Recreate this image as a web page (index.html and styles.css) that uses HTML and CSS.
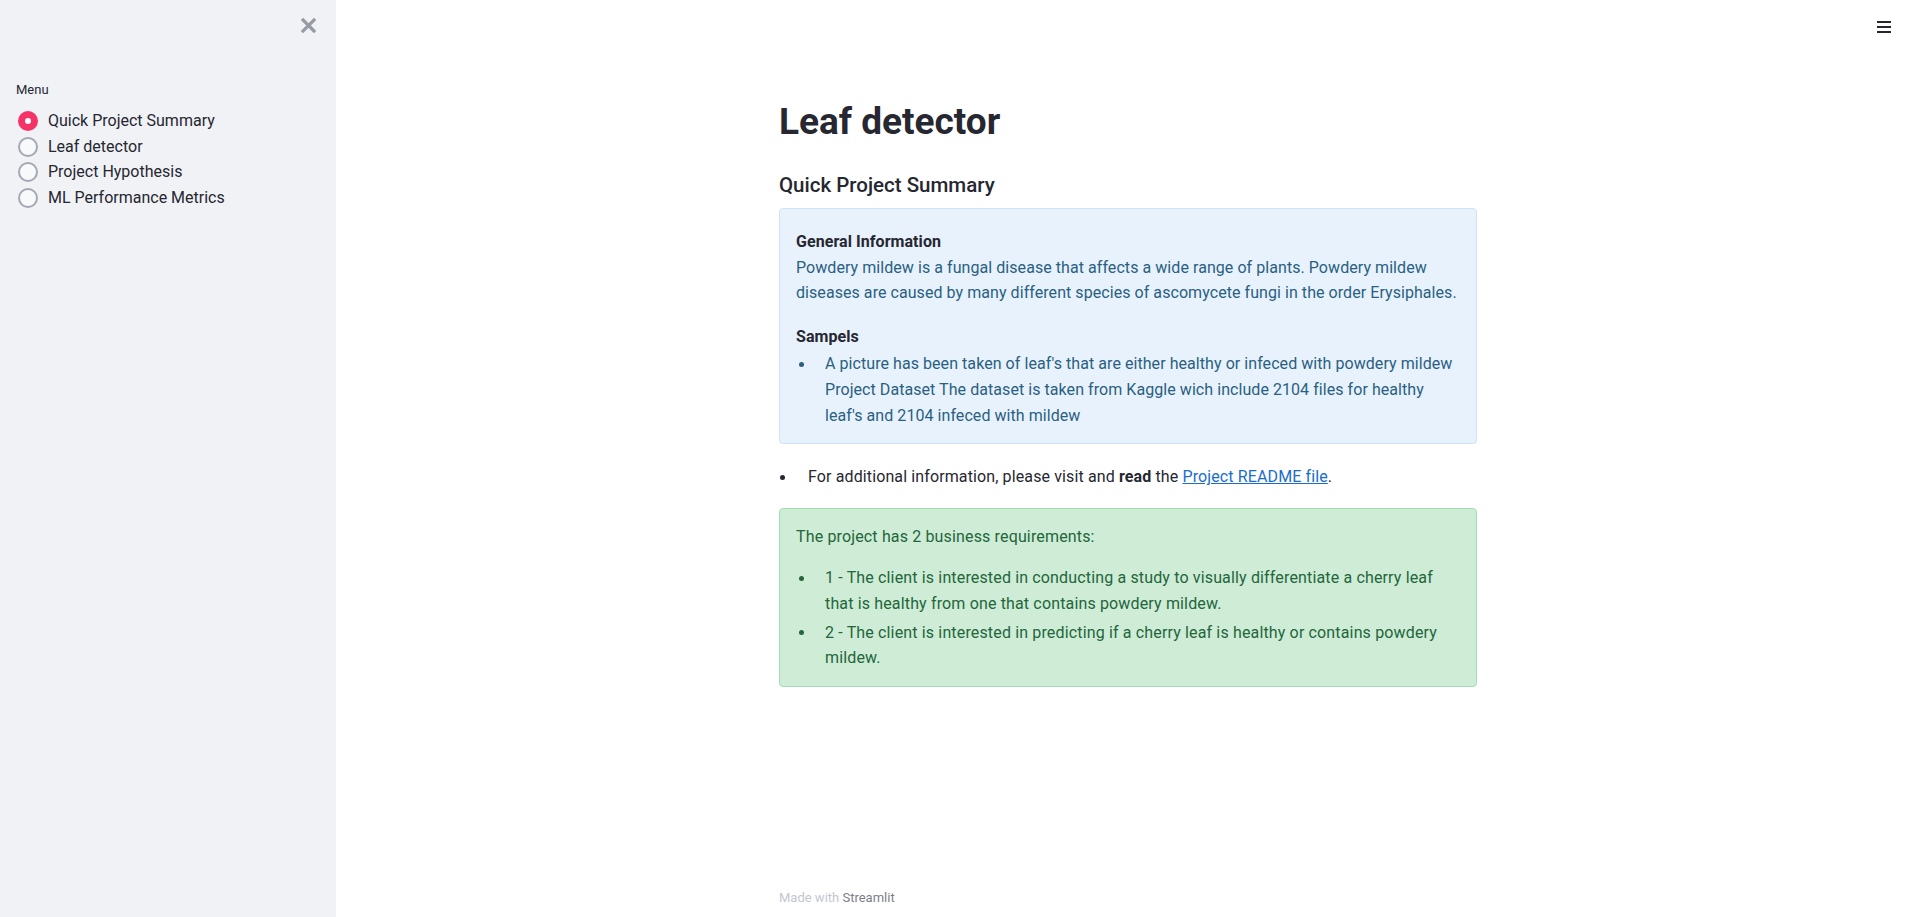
FILE: index.html
```html
<!DOCTYPE html>
<html lang="en">
<head>
<meta charset="utf-8">
<title>Leaf detector · Streamlit</title>
<link rel="stylesheet" href="styles.css">
</head>
<body>
<div class="app">
  <aside class="sidebar">
    <div class="sidebar-top">
      <button class="close-btn" aria-label="Close sidebar">
        <svg width="15" height="15" viewBox="0 0 15 15"><path d="M2 2 L13 13 M13 2 L2 13" stroke="#979aa3" stroke-width="3.2" stroke-linecap="square"/></svg>
      </button>
    </div>
    <div class="sidebar-content">
      <div class="widget-label">Menu</div>
      <div class="radio-group">
        <label class="radio-row"><span class="radio checked"></span><span class="radio-text">Quick Project Summary</span></label>
        <label class="radio-row"><span class="radio"></span><span class="radio-text">Leaf detector</span></label>
        <label class="radio-row"><span class="radio"></span><span class="radio-text">Project Hypothesis</span></label>
        <label class="radio-row"><span class="radio"></span><span class="radio-text">ML Performance Metrics</span></label>
      </div>
    </div>
  </aside>
  <main class="main">
    <div class="toolbar">
      <svg width="14" height="14" viewBox="0 0 14 14"><rect x="0" y="1" width="14" height="2" fill="#262730"/><rect x="0" y="6" width="14" height="2" fill="#262730"/><rect x="0" y="11" width="14" height="2" fill="#262730"/></svg>
    </div>
    <div class="block-container">
      <h1 class="title">Leaf detector</h1>
      <h3 class="subheader">Quick Project Summary</h3>
      <div class="alert info">
        <p class="p-first"><strong>General Information</strong><br>Powdery mildew is a fungal disease that affects a wide range of plants. Powdery mildew diseases are caused by many different species of ascomycete fungi in the order Erysiphales.</p>
        <p class="p-second"><strong>Sampels</strong></p>
        <ul class="alert-list tight">
          <li>A picture has been taken of leaf's that are either healthy or infeced with powdery mildew Project Dataset The dataset is taken from Kaggle wich include 2104 files for healthy leaf's and 2104 infeced with mildew</li>
        </ul>
      </div>
      <ul class="plain-list">
        <li>For additional information, please visit and <strong>read</strong> the <a href="#">Project README file</a>.</li>
      </ul>
      <div class="alert success">
        <p>The project has 2 business requirements:</p>
        <ul class="alert-list">
          <li>1 - The client is interested in conducting a study to visually differentiate a cherry leaf that is healthy from one that contains powdery mildew.</li>
          <li>2 - The client is interested in predicting if a cherry leaf is healthy or contains powdery mildew.</li>
        </ul>
      </div>
    </div>
    <footer class="footer">Made with <span class="footer-brand">Streamlit</span></footer>
  </main>
</div>
</body>
</html>
```
FILE: styles.css
```css
* { box-sizing: border-box; }
html, body { margin: 0; padding: 0; height: 100%; }
body {
  font-family: Roboto, "Noto Sans", sans-serif;
  color: #262730;
  background: #ffffff;
  font-size: 16px;
}
.app {
  display: flex;
  min-height: 917px;
}
.sidebar {
  width: 336px;
  flex: 0 0 336px;
  background: #f0f2f6;
  display: flex;
  flex-direction: column;
}
.sidebar-top {
  height: 51px;
  display: flex;
  justify-content: flex-end;
  align-items: center;
  padding-right: 20px;
}
.close-btn {
  border: 0;
  background: transparent;
  padding: 0;
  width: 15px;
  height: 15px;
  display: flex;
}
.sidebar-content {
  padding: 0 16px;
}
.widget-label {
  font-size: 13px;
  line-height: 16px;
  margin-top: 31px;
  margin-bottom: 10px;
  color: #262730;
}
.radio-group {
  display: flex;
  flex-direction: column;
}
.radio-row {
  display: flex;
  align-items: center;
  height: 25.5px;
  gap: 10px;
  padding-left: 2px;
}
.radio {
  width: 20px;
  height: 20px;
  border-radius: 50%;
  border: 2px solid #a3a8b4;
  background: #f8f9fb;
  flex: 0 0 20px;
  margin-top: 1px;
}
.radio.checked {
  background: #f63366;
  border-color: #f63366;
  position: relative;
}
.radio.checked::after {
  content: "";
  position: absolute;
  width: 6px;
  height: 6px;
  background: #fff;
  border-radius: 50%;
  left: 5px;
  top: 5px;
}
.radio-text {
  font-size: 16px;
  line-height: 25.5px;
  color: #262730;
}
.main {
  flex: 1;
  position: relative;
  display: flex;
  flex-direction: column;
}
.toolbar {
  position: absolute;
  top: 20px;
  right: 29px;
  display: flex;
}
.block-container {
  width: 730px;
  margin: 0 auto;
  padding: 99px 16px 0;
  letter-spacing: 0.12px;
}
.title {
  font-size: 37px;
  line-height: 46px;
  font-weight: 700;
  margin: 0;
  color: #262730;
  letter-spacing: 0;
}
.subheader {
  font-size: 20.5px;
  line-height: 26px;
  font-weight: 500;
  margin: 27px 0 10px;
  color: #262730;
  letter-spacing: 0;
}
.alert {
  border-radius: 4px;
  border: 1px solid;
  padding: 20px 16px 15px;
  line-height: 25.6px;
}
.alert p { margin: 0; }
.info {
  background: #e8f2fc;
  border-color: #cfe3f6;
  color: #2a5f82;
  letter-spacing: 0.06px;
}
.info strong { color: #262730; }
.p-second { margin-top: 18px !important; }
ul {
  list-style: none;
}
li { position: relative; }
.alert-list {
  margin: 2px 0 0;
  padding-left: 29px;
}
.alert-list li::before {
  content: "";
  position: absolute;
  left: -26px;
  top: 10.5px;
  width: 5px;
  height: 5px;
  border-radius: 50%;
  background: currentColor;
}
.success {
  background: #cfecd7;
  border-color: #a6dcb5;
  color: #22663a;
  padding: 15px 16px 15px;
  letter-spacing: 0.15px;
}
.success .alert-list { margin-top: 16px; }
.success .alert-list li + li { margin-top: 3px; }
.plain-list {
  margin: 20px 0 18px;
  padding-left: 29px;
  line-height: 25.6px;
}
.plain-list li::before {
  content: "";
  position: absolute;
  left: -28px;
  top: 10.5px;
  width: 5px;
  height: 5px;
  border-radius: 50%;
  background: #262730;
}
.plain-list a {
  color: #1a6dcc;
  text-decoration: underline;
}
.footer {
  margin-top: auto;
  width: 730px;
  margin-left: auto;
  margin-right: auto;
  padding: 0 16px 11px;
  font-size: 13px;
  line-height: 16px;
  color: #c2c6cf;
}
.footer-brand { color: #7c7f8a; }
```
